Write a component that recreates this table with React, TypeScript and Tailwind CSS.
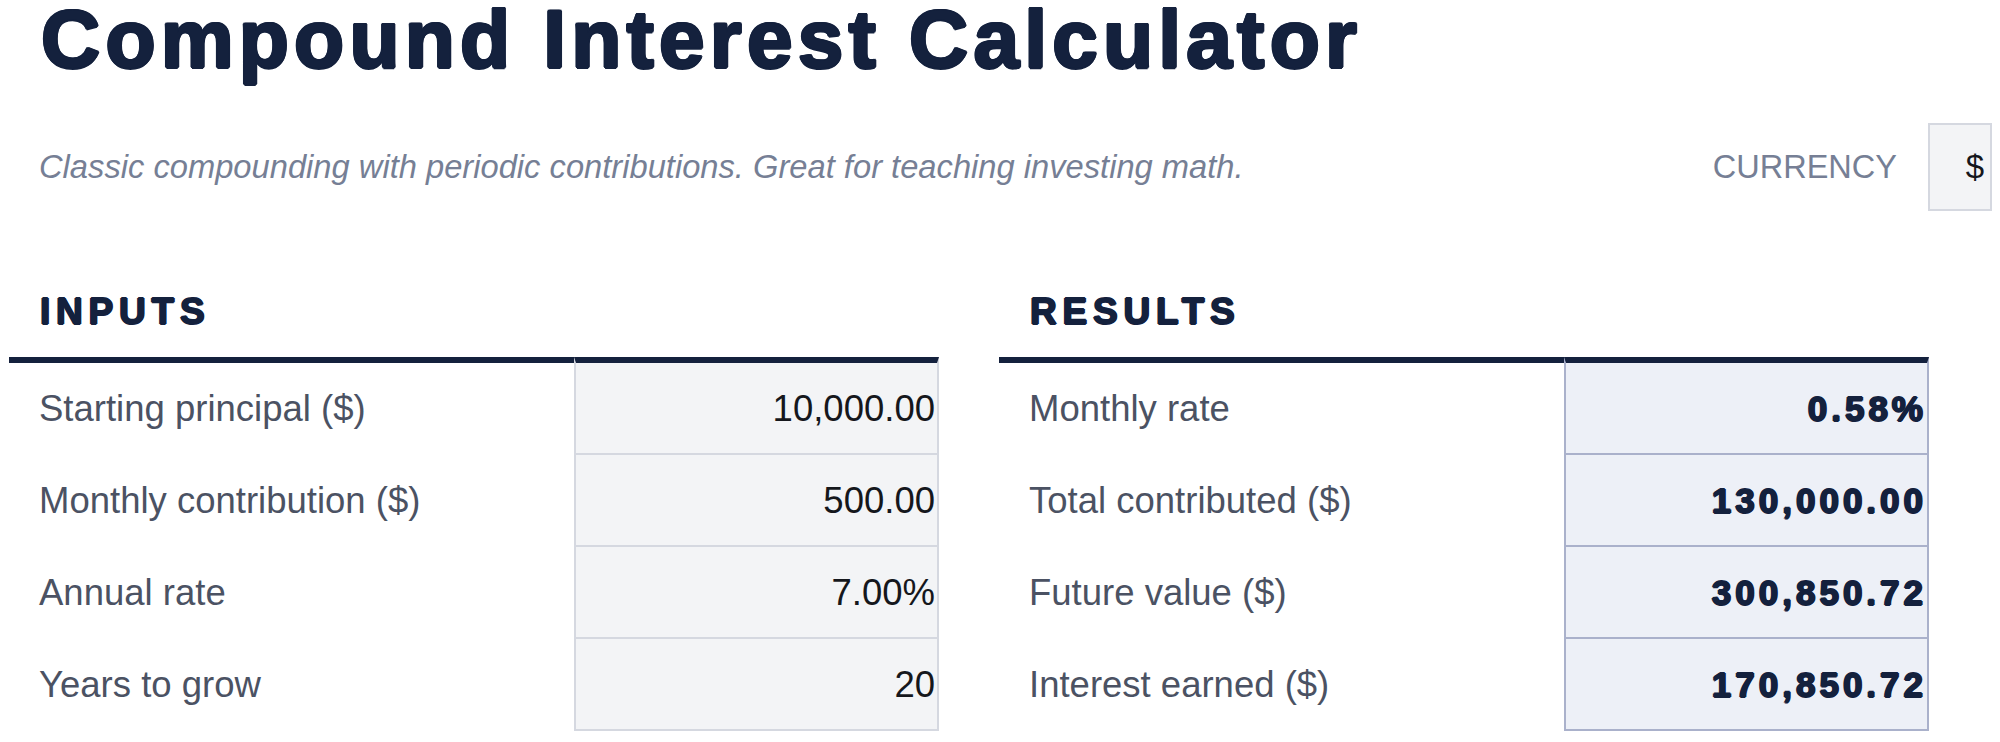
import React from 'react';

type Row = { label: string; value: string };

const inputRows: Row[] = [
  { label: 'Starting principal ($)', value: '10,000.00' },
  { label: 'Monthly contribution ($)', value: '500.00' },
  { label: 'Annual rate', value: '7.00%' },
  { label: 'Years to grow', value: '20' },
];

const resultRows: Row[] = [
  { label: 'Monthly rate', value: '0.58%' },
  { label: 'Total contributed ($)', value: '130,000.00' },
  { label: 'Future value ($)', value: '300,850.72' },
  { label: 'Interest earned ($)', value: '170,850.72' },
];

const Section: React.FC<{ title: string; rows: Row[]; result?: boolean }> = ({ title, rows, result }) => {
  return (
    <div className="w-[930px]">
      <h2 className="pl-[31px] text-[37px] leading-none font-bold tracking-[5.8px] text-[#14213d] [text-shadow:1px_0_0_#14213d,-1px_0_0_#14213d,0_1px_0_#14213d,0_-1px_0_#14213d]">
        {title}
      </h2>
      <div className="mt-[27px]">
        {rows.map((row, i) => {
          const first = i === 0;
          const last = i === rows.length - 1;
          const height = first ? 'h-[96px]' : last ? 'h-[94px]' : 'h-[92px]';
          return (
            <div key={row.label} className="flex">
              <div
                className={`${height} w-[565px] flex items-center pl-[30px] pt-[2px] text-[36.5px] text-[#4b5263] ${
                  first ? 'border-t-[6px] border-[#14213d]' : 'border-t-2 border-transparent'
                } ${last ? 'border-b-2' : ''}`}
              >
                {row.label}
              </div>
              <div
                className={`${height} w-[365px] flex items-center justify-end pt-[2px] border-x-2 ${
                  result ? 'border-[#aab1cb] bg-[#edf0f7]' : 'border-[#d5d8e0] bg-[#f3f4f6]'
                } ${first ? 'border-t-[6px] border-t-[#14213d]' : 'border-t-2'} ${last ? 'border-b-2' : ''}`}
              >
                {result ? (
                  <span className="text-[35px] font-bold tracking-[4px] text-[#14213d] [text-shadow:1px_0_0_#14213d,-1px_0_0_#14213d,0_1px_0_#14213d,0_-1px_0_#14213d]">
                    {row.value}
                  </span>
                ) : (
                  <span className="pr-[2px] text-[36.5px] text-[#15171c]">{row.value}</span>
                )}
              </div>
            </div>
          );
        })}
      </div>
    </div>
  );
};

export default function App() {
  return (
    <div className="min-h-screen w-[2000px] overflow-hidden bg-white pl-[9px] pr-[8px] font-['Liberation_Sans',Arial,sans-serif]">
      <h1 className="pl-[32px] text-[82px] leading-[78px] font-bold tracking-[5.2px] whitespace-nowrap text-[#14213d] [text-shadow:1.5px_0_0_#14213d,-1.5px_0_0_#14213d,0_1.5px_0_#14213d,0_-1.5px_0_#14213d,1px_1px_0_#14213d,-1px_1px_0_#14213d,1px_-1px_0_#14213d,-1px_-1px_0_#14213d]">
        Compound Interest Calculator
      </h1>

      <div className="mt-[45px] flex h-[88px] items-center justify-between">
        <p className="pl-[30px] text-[32.7px] italic text-[#767f95]">
          Classic compounding with periodic contributions. Great for teaching investing math.
        </p>
        <div className="flex items-center gap-[31px]">
          <span className="text-[32.5px] text-[#767f95]">CURRENCY</span>
          <div className="flex h-[88px] w-[64px] items-center justify-end border-2 border-[#d5d8e0] bg-[#f3f4f6] pr-[6px] text-[33px] text-[#15171c]">
            $
          </div>
        </div>
      </div>

      <div className="mt-[82px] flex gap-[60px]">
        <Section title="INPUTS" rows={inputRows} />
        <Section title="RESULTS" rows={resultRows} result />
      </div>
    </div>
  );
}
